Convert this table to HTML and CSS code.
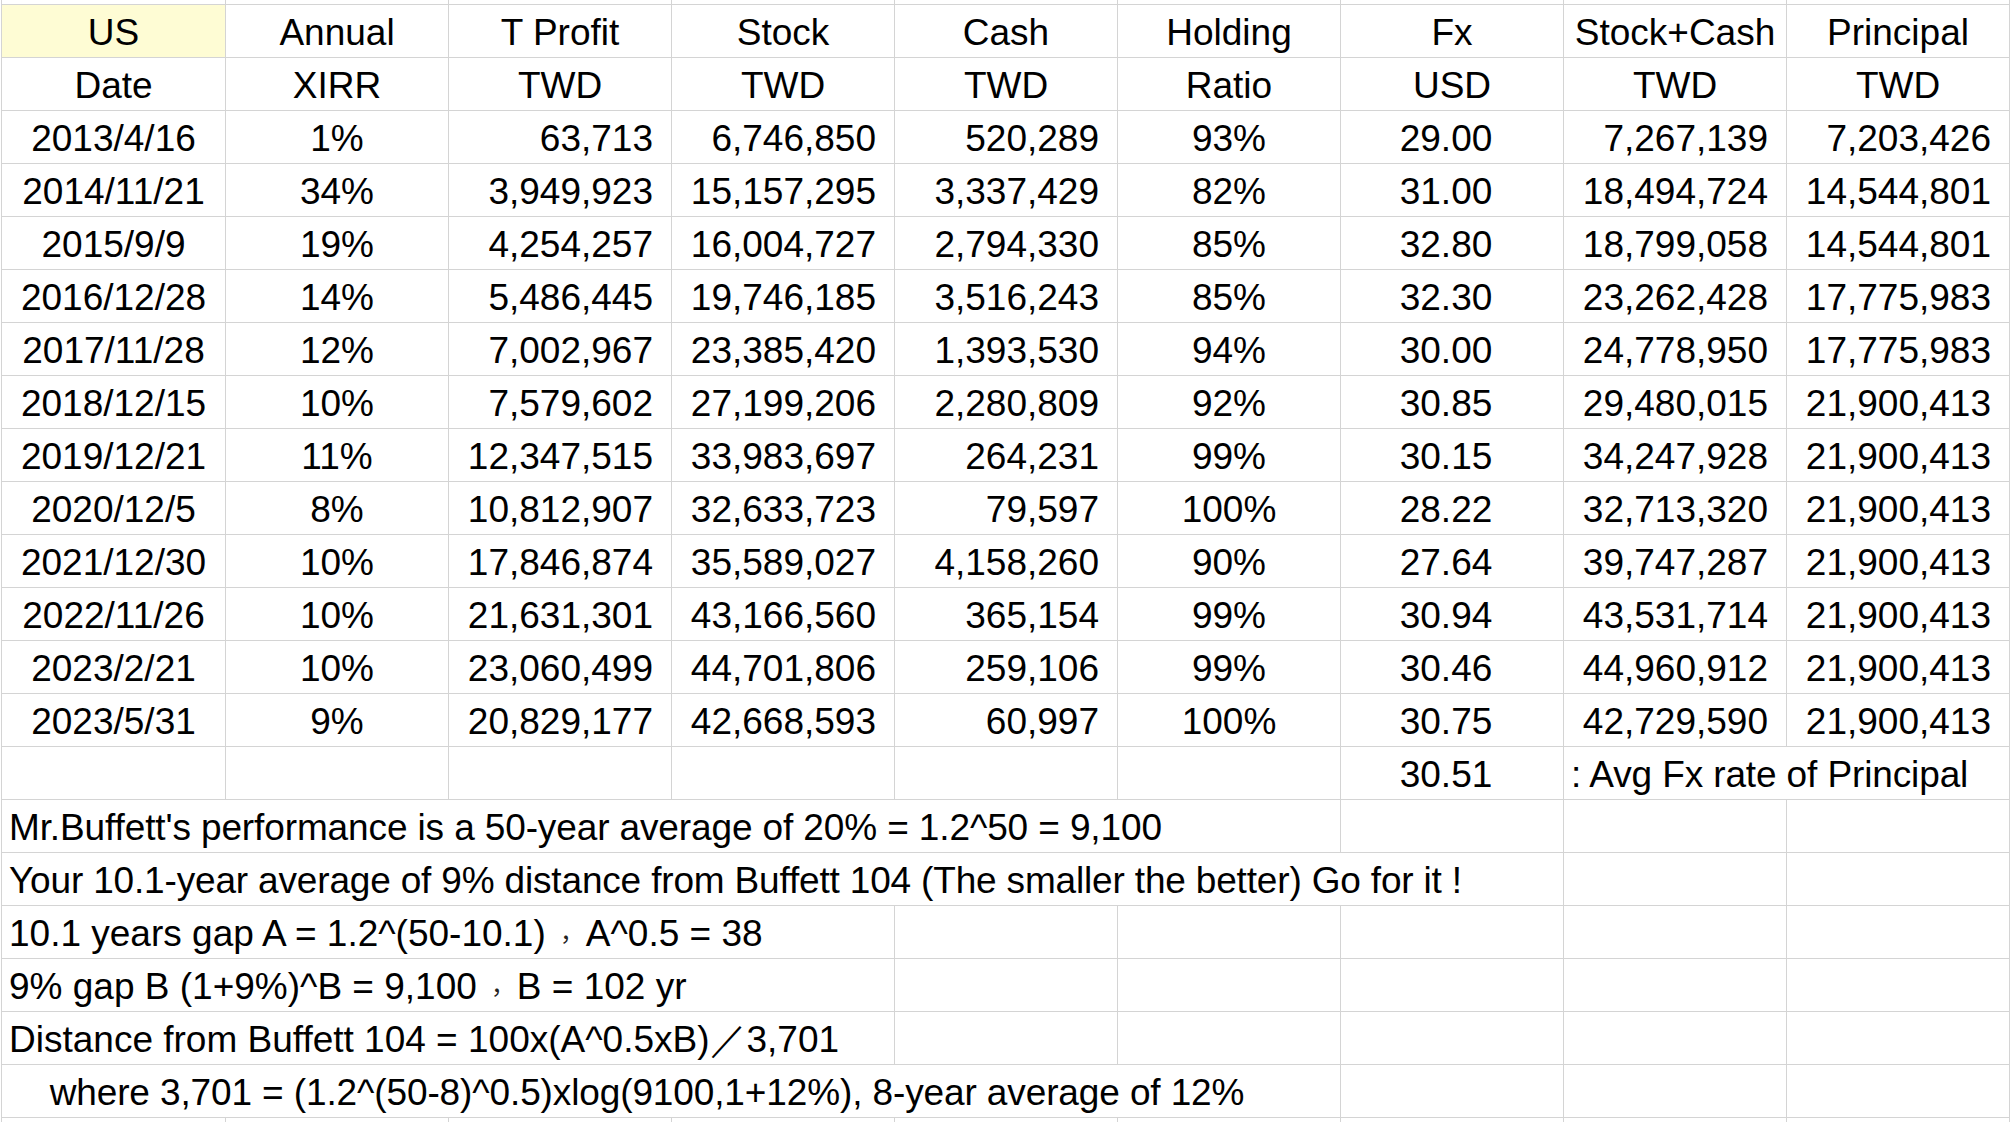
FILE: index.html
```html
<!DOCTYPE html>
<html>
<head>
<meta charset="utf-8">
<link rel="stylesheet" href="styles.css">
</head>
<body>
<div class="sheet">
  <div class="c top"></div><div class="c top"></div><div class="c top"></div><div class="c top"></div><div class="c top"></div><div class="c top"></div><div class="c top"></div><div class="c top"></div><div class="c top"></div>

  <div class="c ctr hl">US</div><div class="c ctr">Annual</div><div class="c ctr">T Profit</div><div class="c ctr">Stock</div><div class="c ctr">Cash</div><div class="c ctr">Holding</div><div class="c ctr">Fx</div><div class="c ctr">Stock+Cash</div><div class="c ctr">Principal</div>
  <div class="c ctr">Date</div><div class="c ctr">XIRR</div><div class="c ctr">TWD</div><div class="c ctr">TWD</div><div class="c ctr">TWD</div><div class="c ctr">Ratio</div><div class="c ctr">USD</div><div class="c ctr">TWD</div><div class="c ctr">TWD</div>

  <div class="c ctr">2013/4/16</div><div class="c ctr">1%</div><div class="c r">63,713</div><div class="c r">6,746,850</div><div class="c r">520,289</div><div class="c ctr">93%</div><div class="c fx">29.00</div><div class="c r">7,267,139</div><div class="c r">7,203,426</div>
  <div class="c ctr">2014/11/21</div><div class="c ctr">34%</div><div class="c r">3,949,923</div><div class="c r">15,157,295</div><div class="c r">3,337,429</div><div class="c ctr">82%</div><div class="c fx">31.00</div><div class="c r">18,494,724</div><div class="c r">14,544,801</div>
  <div class="c ctr">2015/9/9</div><div class="c ctr">19%</div><div class="c r">4,254,257</div><div class="c r">16,004,727</div><div class="c r">2,794,330</div><div class="c ctr">85%</div><div class="c fx">32.80</div><div class="c r">18,799,058</div><div class="c r">14,544,801</div>
  <div class="c ctr">2016/12/28</div><div class="c ctr">14%</div><div class="c r">5,486,445</div><div class="c r">19,746,185</div><div class="c r">3,516,243</div><div class="c ctr">85%</div><div class="c fx">32.30</div><div class="c r">23,262,428</div><div class="c r">17,775,983</div>
  <div class="c ctr">2017/11/28</div><div class="c ctr">12%</div><div class="c r">7,002,967</div><div class="c r">23,385,420</div><div class="c r">1,393,530</div><div class="c ctr">94%</div><div class="c fx">30.00</div><div class="c r">24,778,950</div><div class="c r">17,775,983</div>
  <div class="c ctr">2018/12/15</div><div class="c ctr">10%</div><div class="c r">7,579,602</div><div class="c r">27,199,206</div><div class="c r">2,280,809</div><div class="c ctr">92%</div><div class="c fx">30.85</div><div class="c r">29,480,015</div><div class="c r">21,900,413</div>
  <div class="c ctr">2019/12/21</div><div class="c ctr">11%</div><div class="c r">12,347,515</div><div class="c r">33,983,697</div><div class="c r">264,231</div><div class="c ctr">99%</div><div class="c fx">30.15</div><div class="c r">34,247,928</div><div class="c r">21,900,413</div>
  <div class="c ctr">2020/12/5</div><div class="c ctr">8%</div><div class="c r">10,812,907</div><div class="c r">32,633,723</div><div class="c r">79,597</div><div class="c ctr">100%</div><div class="c fx">28.22</div><div class="c r">32,713,320</div><div class="c r">21,900,413</div>
  <div class="c ctr">2021/12/30</div><div class="c ctr">10%</div><div class="c r">17,846,874</div><div class="c r">35,589,027</div><div class="c r">4,158,260</div><div class="c ctr">90%</div><div class="c fx">27.64</div><div class="c r">39,747,287</div><div class="c r">21,900,413</div>
  <div class="c ctr">2022/11/26</div><div class="c ctr">10%</div><div class="c r">21,631,301</div><div class="c r">43,166,560</div><div class="c r">365,154</div><div class="c ctr">99%</div><div class="c fx">30.94</div><div class="c r">43,531,714</div><div class="c r">21,900,413</div>
  <div class="c ctr">2023/2/21</div><div class="c ctr">10%</div><div class="c r">23,060,499</div><div class="c r">44,701,806</div><div class="c r">259,106</div><div class="c ctr">99%</div><div class="c fx">30.46</div><div class="c r">44,960,912</div><div class="c r">21,900,413</div>
  <div class="c ctr">2023/5/31</div><div class="c ctr">9%</div><div class="c r">20,829,177</div><div class="c r">42,668,593</div><div class="c r">60,997</div><div class="c ctr">100%</div><div class="c fx">30.75</div><div class="c r">42,729,590</div><div class="c r">21,900,413</div>

  <div class="c"></div><div class="c"></div><div class="c"></div><div class="c"></div><div class="c"></div><div class="c"></div><div class="c fx">30.51</div><div class="c l span2">: Avg Fx rate of Principal</div>

  <div class="c l span6">Mr.Buffett's performance is a 50-year average of 20% = 1.2^50 = 9,100</div><div class="c"></div><div class="c"></div><div class="c"></div>
  <div class="c l tight span7">Your 10.1-year average of 9% distance from Buffett 104 (The smaller the better) Go for it !</div><div class="c"></div><div class="c"></div>
  <div class="c l plain span4">10.1 years gap A = 1.2^(50-10.1)<span class="cm">，</span>A^0.5 = 38</div><div class="c"></div><div class="c"></div><div class="c"></div><div class="c"></div><div class="c"></div>
  <div class="c l plain span4">9% gap B (1+9%)^B = 9,100<span class="cm">，</span>B = 102 yr</div><div class="c"></div><div class="c"></div><div class="c"></div><div class="c"></div><div class="c"></div>
  <div class="c l plain span4">Distance from Buffett 104 = 100x(A^0.5xB)<span class="fw">／</span>3,701</div><div class="c"></div><div class="c"></div><div class="c"></div><div class="c"></div><div class="c"></div>
  <div class="c l span6 pre">    where 3,701 = (1.2^(50-8)^0.5)xlog(9100,1+12%), 8-year average of 12%</div><div class="c"></div><div class="c"></div><div class="c"></div>

  <div class="c"></div><div class="c"></div><div class="c"></div><div class="c"></div><div class="c"></div><div class="c"></div><div class="c"></div><div class="c"></div><div class="c"></div>
</div>
</body>
</html>
```
FILE: styles.css
```css
html, body {
  margin: 0;
  padding: 0;
  background: #ffffff;
  overflow: hidden;
}

body {
  font-family: "Liberation Sans", Arial, "Noto Sans CJK TC", sans-serif;
  font-size: 37px;
  color: #000000;
}

.sheet {
  display: grid;
  grid-template-columns: 224px repeat(8, 223px);
  grid-template-rows: 5px repeat(22, 53px);
  margin-left: 1px;
  border-left: 1px solid #d4d4d4;
  width: max-content;
}

.c {
  box-sizing: border-box;
  border-right: 1px solid #d4d4d4;
  border-bottom: 1px solid #d4d4d4;
  padding-top: 4px;
  line-height: 47px;
  white-space: nowrap;
  overflow: visible;
}

.top {
  padding: 0;
  line-height: 0;
}

.ctr {
  text-align: center;
}

.r {
  text-align: right;
  padding-right: 18px;
}

.fx {
  text-align: center;
  padding-right: 12px;
}

.l {
  text-align: left;
  padding-left: 7px;
  letter-spacing: -0.12px;
}

.l.tight {
  letter-spacing: -0.17px;
}

.l.plain {
  letter-spacing: 0;
}

.pre {
  white-space: pre;
}

.cm {
  display: inline-block;
  width: 40px;
  text-align: center;
  font-family: "Noto Sans CJK TC", sans-serif;
  font-size: 24px;
  line-height: 24px;
  vertical-align: -2px;
  color: #222222;
}

.fw {
  display: inline-block;
  width: 37px;
  text-align: center;
  font-family: "Liberation Sans", Arial, sans-serif;
}

.hl {
  background: #fefcd4;
}

.span2 { grid-column: span 2; }
.span4 { grid-column: span 4; }
.span6 { grid-column: span 6; }
.span7 { grid-column: span 7; }
```
